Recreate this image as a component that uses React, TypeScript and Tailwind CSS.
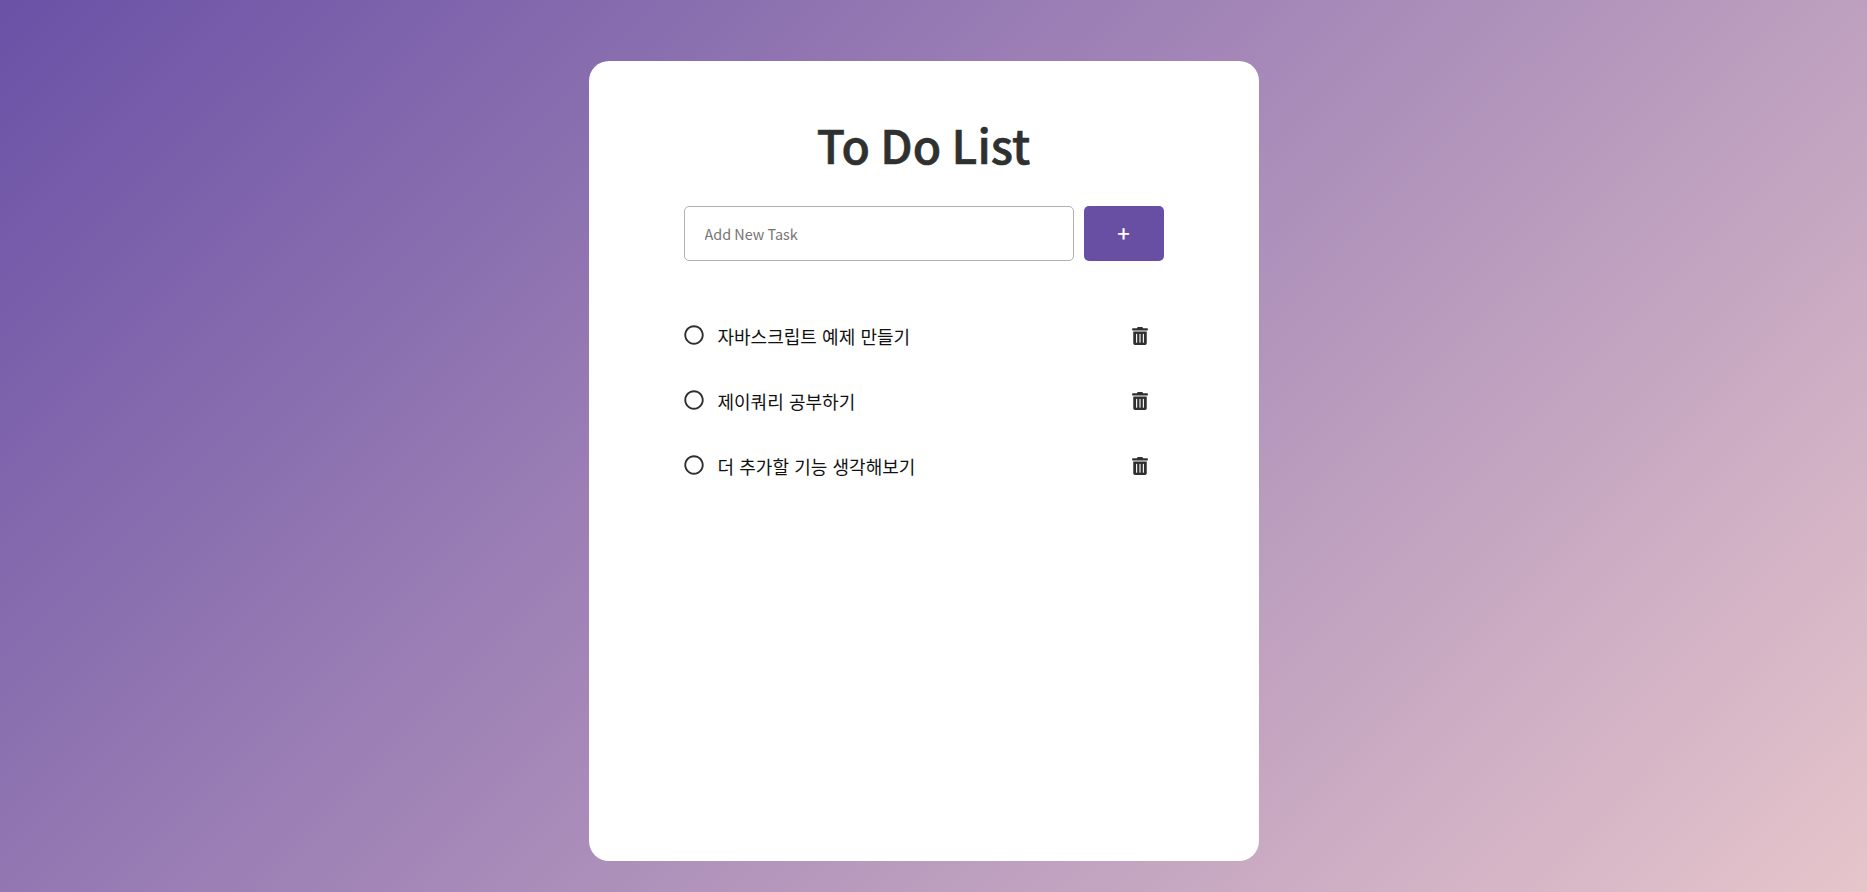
import { FaRegCircle, FaTrashAlt } from "react-icons/fa";

const tasks = ["자바스크립트 예제 만들기", "제이쿼리 공부하기", "더 추가할 기능 생각해보기"];

export default function App() {
  return (
    <div className="flex h-[892px] items-start justify-center bg-[linear-gradient(135deg,#6a51a6,#e6c5cb)] pt-[61px] pr-[20px] font-['Noto_Sans_CJK_KR','Noto_Sans',sans-serif]">
      <div className="h-[800px] w-[670px] rounded-[20px] bg-white px-[95px] pt-[47px]">
        <h1 className="text-center text-[46.3px] leading-[72px] font-medium text-[#2f3030] [-webkit-text-stroke:0.6px_#2f3030]">To Do List</h1>
        <div className="mt-[26px] flex gap-[10px]">
          <input placeholder="Add New Task" className="h-[55px] w-[390px] rounded-[5px] border border-[#b0b0b0] px-5 text-[14.4px] outline-none placeholder:text-[#757575]" />
          <button className="h-[55px] w-[80px] rounded-[5px] bg-[#684fa3] pb-[3px] text-[22px] leading-none font-medium text-white">+</button>
        </div>
        <ul className="mt-[42px]">
          {tasks.map((t) => (
            <li key={t} className="flex h-[65px] items-center">
              <FaRegCircle className="-translate-y-px text-[20px] text-[#2f3030]" />
              <span className="ml-[14px] flex-1 translate-y-px text-[18px] text-[#111] [word-spacing:1.2px]">{t}</span>
              <FaTrashAlt className="mr-[15px] text-[18px] text-[#2f3030]" />
            </li>
          ))}
        </ul>
      </div>
    </div>
  );
}
